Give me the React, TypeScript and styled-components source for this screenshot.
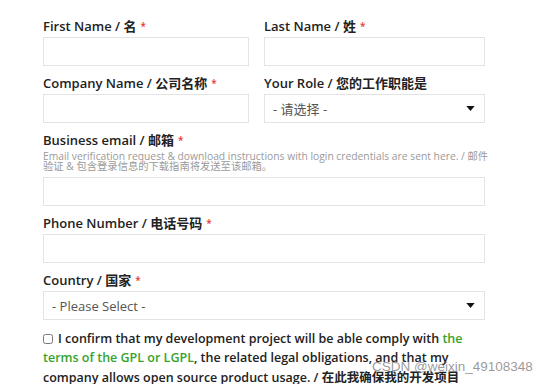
import styled, { createGlobalStyle } from 'styled-components';

const GlobalStyle = createGlobalStyle`
  body {
    margin: 0;
    background: #fff;
    font-family: "Open Sans", "Noto Sans CJK SC", sans-serif;
  }
`;

const Field = ({
  label,
  required,
  hint,
  children,
}: {
  label: React.ReactNode;
  required?: boolean;
  hint?: React.ReactNode;
  children: React.ReactNode;
}) => (
  <StyledField>
    <Label>
      {label}
      {required && <Star>*</Star>}
    </Label>
    {hint && <Hint>{hint}</Hint>}
    {children}
  </StyledField>
);

const Select = ({ placeholder }: { placeholder: string }) => (
  <SelectBox>
    <span>{placeholder}</span>
    <Caret viewBox="0 0 10 6">
      <path d="M0 0h10L5 6z" fill="#111" />
    </Caret>
  </SelectBox>
);

const App = () => {
  return (
    <Page>
      <GlobalStyle />
      <Form>
        <Row>
          <Field label={<>First Name / <Zh>名</Zh></>} required>
            <Input />
          </Field>
          <Field label={<>Last Name / <Zh>姓</Zh></>} required>
            <Input />
          </Field>
        </Row>
        <Row>
          <Field label={<>Company Name / <Zh>公司名称</Zh></>} required>
            <Input />
          </Field>
          <Field label={<>Your Role / <Zh>您的工作职能是</Zh></>}>
            <Select placeholder="- 请选择 -" />
          </Field>
        </Row>
        <Field
          label={<>Business email / <Zh>邮箱</Zh></>}
          required
          hint={
            <>
              Email verification request &amp; download instructions with login credentials are sent here. / 邮件
              <br />
              验证 &amp; 包含登录信息的下载指南将发送至该邮箱。
            </>
          }
        >
          <Input />
        </Field>
        <Field label={<>Phone Number / <Zh>电话号码</Zh></>} required>
          <Input />
        </Field>
        <Field label={<>Country / <Zh>国家</Zh></>} required>
          <Select placeholder="- Please Select -" />
        </Field>
        <Consent>
          <Check type="checkbox" />I confirm that my development project will be able comply with{' '}
          <Link>the terms of the GPL or LGPL</Link>, the related legal obligations, and that my
          company allows open source product usage. / <Zh>在此我确保我的开发项目</Zh>
        </Consent>
      </Form>
      <Watermark>CSDN @weixin_49108348</Watermark>
    </Page>
  );
};

const Page = styled.div`
  position: relative;
  width: 558px;
  height: 384px;
  overflow: hidden;
  padding: 17px 0 0 43px;
  box-sizing: border-box;
`;
const Form = styled.form`
  width: 442px;
`;
const Row = styled.div`
  display: grid;
  grid-template-columns: 206px 221px;
  column-gap: 15px;
`;
const StyledField = styled.div`
  display: flex;
  flex-direction: column;
  margin-bottom: 8px;
`;
const Label = styled.label`
  font-size: 13px;
  font-weight: 600;
  line-height: 18px;
  color: #222;
  margin-bottom: 2px;
  white-space: nowrap;
`;
const Zh = styled.span`
  font-family: "Noto Sans CJK SC", sans-serif;
  font-weight: 700;
`;
const Star = styled.span`
  color: #e53935;
  font-size: 10px;
  margin-left: 4px;
  vertical-align: top;
`;
const Hint = styled.div`
  font-size: 10.3px;
  line-height: 9.5px;
  color: #9a9a9a;
  white-space: nowrap;
  margin: 1px 0 6px;
`;
const Input = styled.input`
  height: 29px;
  box-sizing: border-box;
  border: 1px solid #e3e3e3;
  border-radius: 0;
  background: #fff;
  outline: none;
`;
const SelectBox = styled.div`
  height: 29px;
  box-sizing: border-box;
  border: 1px solid #e3e3e3;
  display: flex;
  align-items: center;
  justify-content: space-between;
  padding: 0 9px 0 8px;
  font-size: 13px;
  color: #555;
`;
const Caret = styled.svg`
  width: 9px;
  height: 5px;
`;
const Consent = styled.p`
  margin: 9px 0 0;
  font-size: 12.5px;
  font-weight: 600;
  line-height: 19px;
  color: #222;
`;
const Check = styled.input`
  width: 10px;
  height: 10px;
  margin: 0 5px 0 0;
  vertical-align: -1px;
`;
const Link = styled.span`
  color: #36a32b;
`;
const Watermark = styled.div`
  position: absolute;
  left: 372px;
  top: 359px;
  font-family: "Liberation Sans", sans-serif;
  font-size: 13.5px;
  color: rgba(120, 120, 120, 0.75);
  pointer-events: none;
`;

export default App;
